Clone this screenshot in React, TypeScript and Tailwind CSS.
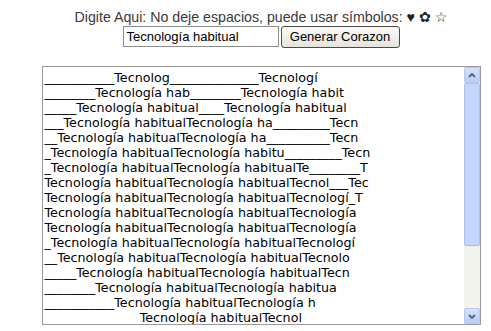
import React from "react";

const lines = [
  "___________Tecnolog______________Tecnologí",
  "________Tecnología hab________Tecnología habit",
  "_____Tecnología habitual____Tecnología habitual",
  "___Tecnología habitualTecnología ha_________Tecn",
  "__Tecnología habitualTecnología ha__________Tecn",
  "_Tecnología habitualTecnología habitu_________Tecn",
  "_Tecnología habitualTecnología habitualTe________T",
  "Tecnología habitualTecnología habitualTecnol___Tec",
  "Tecnología habitualTecnología habitualTecnologí_T",
  "Tecnología habitualTecnología habitualTecnología",
  "Tecnología habitualTecnología habitualTecnología",
  "_Tecnología habitualTecnología habitualTecnologí",
  "__Tecnología habitualTecnología habitualTecnolo",
  "_____Tecnología habitualTecnología habitualTecn",
  "________Tecnología habitualTecnología habitua",
  "___________Tecnología habitualTecnología h",
  "_______________Tecnología habitualTecnol",
];

export default function App() {
  return (
    <div className="w-[491px] h-[331px] bg-white overflow-hidden pl-[31px] pt-[9px] flex flex-col items-center">
      <div className="text-[14.2px] leading-[16px] text-[#3a3a3a] font-['Liberation_Sans','DejaVu_Sans',sans-serif] whitespace-nowrap">
        Digite Aqui: No deje espacios, puede usar símbolos: <span className="text-[#222]">♥ ✿ ☆</span>
      </div>
      <div className="mt-[1px] flex items-start gap-[2px]">
        <div className="w-[156px] h-[21px] border border-[#8d8d8d] bg-white pl-[3px] text-[13px] leading-[19px] text-black font-['Liberation_Sans',sans-serif] whitespace-nowrap overflow-hidden">
          Tecnología habitual
        </div>
        <div className="w-[119px] h-[22px] border border-[#4a4a4a] rounded-[3px] bg-gradient-to-b from-[#fbfbf8] to-[#e4e3dc] text-[13px] leading-[20px] text-black font-['Liberation_Sans',sans-serif] flex justify-center whitespace-nowrap">
          Generar Corazon
        </div>
      </div>
      <div className="mt-[18px] w-[439px] h-[259px] border border-[#9a9a9a] bg-white flex">
        <div className="flex-1 overflow-hidden pl-[2px] pt-[3px] text-[12.7px] leading-[15px] text-black font-['DejaVu_Sans','Verdana',sans-serif] whitespace-nowrap">
          {lines.map((l, i) => (
            <div key={i}>{l}</div>
          ))}
        </div>
        <div className="w-[16px] h-full bg-[#f3f3ee] flex flex-col">
          <div className="h-[16px] border border-[#b6c7f2] rounded-[2px] bg-gradient-to-b from-[#d6e1fb] to-[#bccdf6] flex items-center justify-center">
            <svg width="8" height="5" viewBox="0 0 8 5">
              <path d="M1 4 L4 1 L7 4" stroke="#4d6185" strokeWidth="1.8" fill="none" />
            </svg>
          </div>
          <div className="h-[163px] border border-[#aebff0] rounded-[2px] bg-[#c5d5fd]" />
          <div className="flex-1" />
          <div className="h-[16px] border border-[#b6c7f2] rounded-[2px] bg-gradient-to-b from-[#d6e1fb] to-[#bccdf6] flex items-center justify-center">
            <svg width="8" height="5" viewBox="0 0 8 5">
              <path d="M1 1 L4 4 L7 1" stroke="#4d6185" strokeWidth="1.8" fill="none" />
            </svg>
          </div>
        </div>
      </div>
    </div>
  );
}
